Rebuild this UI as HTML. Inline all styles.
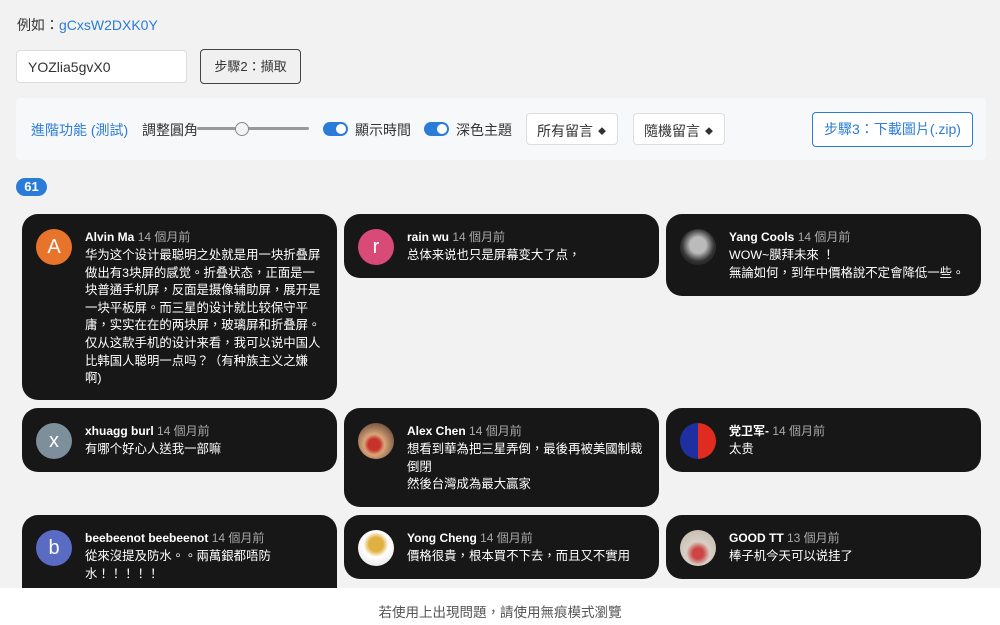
<!DOCTYPE html>
<html><head><meta charset="utf-8"><style>
*{box-sizing:border-box;margin:0;padding:0}
html,body{width:1000px;height:625px;overflow:hidden}
body{background:#f2f2f2;font-family:"Liberation Sans","Noto Sans CJK TC",sans-serif;color:#222;position:relative}
.abs{position:absolute;white-space:nowrap}
.ex{left:17px;top:15px;font-size:14px;color:#333}
.ex a{color:#2b7cd9;text-decoration:none}
.inp{left:16px;top:50px;width:171px;height:33px;background:#fff;border:1px solid #ddd;border-radius:4px;font-size:14px;padding:8px 11px;color:#333}
.btn2{left:200px;top:49px;width:101px;height:35px;border:1px solid #444;border-radius:4px;background:#f0f0f0;font-size:13px;color:#333;text-align:center;line-height:33px}
.panel{left:16px;top:98px;width:970px;height:62px;background:#f7f8fa;border-radius:4px}
.adv{left:31px;top:120px;font-size:14px;color:#2b7cd9}
.lbl{font-size:14px;color:#333;top:120px}
.track{left:197px;top:127px;width:112px;height:3px;background:#999;border-radius:2px}
.knob{left:235px;top:122px;width:14px;height:14px;border-radius:50%;background:#f4f4f4;border:1px solid #888}
.tog{top:122px;width:25px;height:14px;border-radius:7px;background:#2b7cd9}
.tog::after{content:"";position:absolute;right:2px;top:2px;width:10px;height:10px;border-radius:50%;background:#fff}
.sel{top:113px;height:32px;background:#fff;border:1px solid #ddd;border-radius:4px;font-size:14px;color:#333;padding:7px 10px}
.sel span{font-size:8px;margin-left:5px;vertical-align:2px}
.b3{left:812px;top:112px;width:161px;height:35px;border:1px solid #2b7cd9;border-radius:4px;color:#2b7cd9;font-size:14px;text-align:center;line-height:33px;background:#fff}
.badge{left:16px;top:178px;width:31px;height:18px;border-radius:9px;background:#2b7cd9;color:#fff;font-size:13px;font-weight:bold;text-align:center;line-height:18px}
.card{position:absolute;background:#171717;border-radius:16px;width:315px;color:#fff}
.av{position:absolute;left:14px;top:15px;width:36px;height:36px;border-radius:50%;color:#fff;font-size:20px;text-align:center;line-height:36px}
.nm{position:absolute;left:63px;top:14px;font-size:12px;font-weight:bold;white-space:nowrap}
.nm i{font-style:normal;font-weight:normal;color:#aaa}
.tx{position:absolute;left:63px;top:33px;width:237px;font-size:12.4px;line-height:17.6px}
.foot{left:0;top:588px;width:1000px;height:37px;background:#fff;text-align:center;font-size:13.5px;color:#555;line-height:50px}
</style></head><body>
<div class="abs ex">例如：<a>gCxsW2DXK0Y</a></div>
<div class="abs inp">YOZlia5gvX0</div>
<div class="abs btn2">步驟2：擷取</div>
<div class="abs panel"></div>
<div class="abs adv">進階功能 (測試)</div>
<div class="abs lbl" style="left:142px">調整圓角</div>
<div class="abs track"></div><div class="abs knob"></div>
<div class="abs tog" style="left:323px"></div>
<div class="abs lbl" style="left:355px">顯示時間</div>
<div class="abs tog" style="left:424px"></div>
<div class="abs lbl" style="left:456px">深色主題</div>
<div class="abs sel" style="left:526px;width:92px">所有留言<span>◆</span></div>
<div class="abs sel" style="left:633px;width:92px">隨機留言<span>◆</span></div>
<div class="abs b3">步驟3：下載圖片(.zip)</div>
<div class="abs badge">61</div>

<div class="card" style="left:22px;top:214px;height:186px"><div class="av" style="background:#e8742c">A</div><div class="nm">Alvin Ma <i>14 個月前</i></div><div class="tx">华为这个设计最聪明之处就是用一块折叠屏做出有3块屏的感觉。折叠状态，正面是一块普通手机屏，反面是摄像辅助屏，展开是一块平板屏。而三星的设计就比较保守平庸，实实在在的两块屏，玻璃屏和折叠屏。仅从这款手机的设计来看，我可以说中国人比韩国人聪明一点吗？（有种族主义之嫌啊)</div></div>
<div class="card" style="left:344px;top:214px;height:64px"><div class="av" style="background:#d84a78">r</div><div class="nm">rain wu <i>14 個月前</i></div><div class="tx">总体来说也只是屏幕变大了点，</div></div>
<div class="card" style="left:666px;top:214px;height:82px"><div class="av" style="background:radial-gradient(circle at 50% 45%,#bbb 0 30%,#333 60%,#111)"></div><div class="nm">Yang Cools <i>14 個月前</i></div><div class="tx" style="width:250px">WOW~膜拜未來 ！<br>無論如何，到年中價格說不定會降低一些。</div></div>

<div class="card" style="left:22px;top:408px;height:64px"><div class="av" style="background:#7d8f9a">x</div><div class="nm">xhuagg burl <i>14 個月前</i></div><div class="tx">有哪个好心人送我一部嘛</div></div>
<div class="card" style="left:344px;top:408px;height:99px"><div class="av" style="background:radial-gradient(circle at 45% 60%,#c9322a 0 20%,#d9a67a 35%,#6b4a3a 80%)"></div><div class="nm">Alex Chen <i>14 個月前</i></div><div class="tx">想看到華為把三星弄倒，最後再被美國制裁倒閉<br>然後台灣成為最大贏家</div></div>
<div class="card" style="left:666px;top:408px;height:64px"><div class="av" style="background:linear-gradient(90deg,#1e2fa0 50%,#e02b20 50%)"></div><div class="nm">党卫军- <i>14 個月前</i></div><div class="tx">太贵</div></div>

<div class="card" style="left:22px;top:515px;height:90px"><div class="av" style="background:#5a6bc4">b</div><div class="nm">beebeenot beebeenot <i>14 個月前</i></div><div class="tx" style="width:200px">從來沒提及防水。。兩萬銀都唔防水！！！！！</div></div>
<div class="card" style="left:344px;top:515px;height:64px"><div class="av" style="background:radial-gradient(circle at 50% 40%,#e0b040 0 25%,#fff 45%,#ddd)"></div><div class="nm">Yong Cheng <i>14 個月前</i></div><div class="tx">價格很貴，根本買不下去，而且又不實用</div></div>
<div class="card" style="left:666px;top:515px;height:64px"><div class="av" style="background:radial-gradient(circle at 50% 65%,#c44 0 18%,#d8cfc4 40%,#bfb6aa)"></div><div class="nm">GOOD TT <i>13 個月前</i></div><div class="tx">棒子机今天可以说挂了</div></div>

<div class="abs foot">若使用上出現問題，請使用無痕模式瀏覽</div>
</body></html>
